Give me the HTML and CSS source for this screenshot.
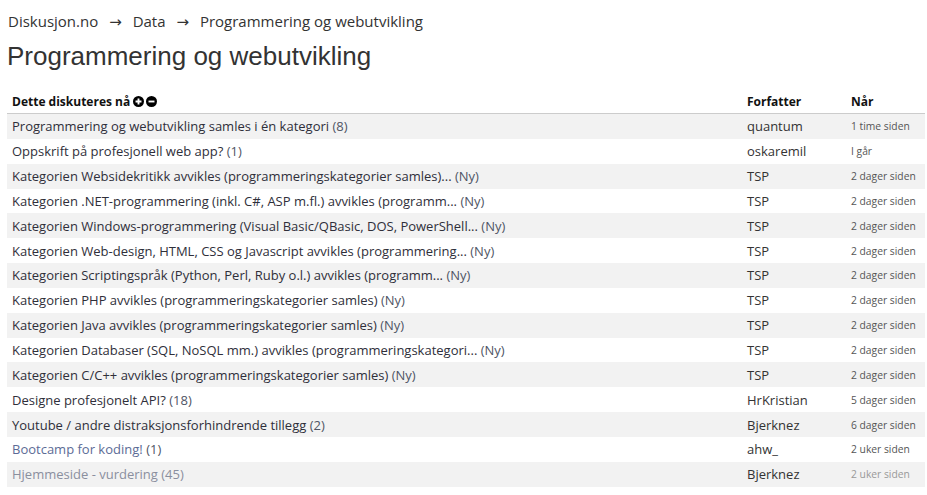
FILE: index.html
```
<!DOCTYPE html>
<html lang="no">
<head>
    <meta charset="UTF-8">
    <title>Programmering og webutvikling</title>
    <link rel="stylesheet" href="styles.css">
</head>
<body>
<div class="page">
    <div class="crumbs">
        <a href="#">Diskusjon.no</a>
        <span class="arrow">&rarr;</span>
        <a href="#">Data</a>
        <span class="arrow">&rarr;</span>
        <a href="#">Programmering og webutvikling</a>
    </div>
    <h1>Programmering og webutvikling</h1>

    <table class="topics">
        <thead>
        <tr>
            <th class="title">Dette diskuteres nå
                <svg class="ico" viewBox="0 0 10 10"><circle cx="5" cy="5" r="5"/><path d="M5 2.3v5.4M2.3 5h5.4" stroke="#fff" stroke-width="1.7"/></svg><svg class="ico" viewBox="0 0 10 10"><circle cx="5" cy="5" r="5"/><path d="M2.3 5h5.4" stroke="#fff" stroke-width="1.7"/></svg>
            </th>
            <th class="author">Forfatter</th>
            <th class="when">Når</th>
        </tr>
        </thead>
        <tbody>
        <tr><td class="title"><a href="#">Programmering og webutvikling samles i én kategori</a> <span class="count">(8)</span></td><td class="author">quantum</td><td class="when">1 time siden</td></tr>
        <tr><td class="title"><a href="#">Oppskrift på profesjonell web app?</a> <span class="count">(1)</span></td><td class="author">oskaremil</td><td class="when">I går</td></tr>
        <tr><td class="title"><a href="#">Kategorien Websidekritikk avvikles (programmeringskategorier samles)...</a> <span class="count">(Ny)</span></td><td class="author">TSP</td><td class="when">2 dager siden</td></tr>
        <tr><td class="title"><a href="#">Kategorien .NET-programmering (inkl. C#, ASP m.fl.) avvikles (programm...</a> <span class="count">(Ny)</span></td><td class="author">TSP</td><td class="when">2 dager siden</td></tr>
        <tr><td class="title"><a href="#">Kategorien Windows-programmering (Visual Basic/QBasic, DOS, PowerShell...</a> <span class="count">(Ny)</span></td><td class="author">TSP</td><td class="when">2 dager siden</td></tr>
        <tr><td class="title"><a href="#">Kategorien Web-design, HTML, CSS og Javascript avvikles (programmering...</a> <span class="count">(Ny)</span></td><td class="author">TSP</td><td class="when">2 dager siden</td></tr>
        <tr><td class="title"><a href="#">Kategorien Scriptingspråk (Python, Perl, Ruby o.l.) avvikles (programm...</a> <span class="count">(Ny)</span></td><td class="author">TSP</td><td class="when">2 dager siden</td></tr>
        <tr><td class="title"><a href="#">Kategorien PHP avvikles (programmeringskategorier samles)</a> <span class="count">(Ny)</span></td><td class="author">TSP</td><td class="when">2 dager siden</td></tr>
        <tr><td class="title"><a href="#">Kategorien Java avvikles (programmeringskategorier samles)</a> <span class="count">(Ny)</span></td><td class="author">TSP</td><td class="when">2 dager siden</td></tr>
        <tr><td class="title"><a href="#">Kategorien Databaser (SQL, NoSQL mm.) avvikles (programmeringskategori...</a> <span class="count">(Ny)</span></td><td class="author">TSP</td><td class="when">2 dager siden</td></tr>
        <tr><td class="title"><a href="#">Kategorien C/C++ avvikles (programmeringskategorier samles)</a> <span class="count">(Ny)</span></td><td class="author">TSP</td><td class="when">2 dager siden</td></tr>
        <tr><td class="title"><a href="#">Designe profesjonelt API?</a> <span class="count">(18)</span></td><td class="author">HrKristian</td><td class="when">5 dager siden</td></tr>
        <tr><td class="title"><a href="#">Youtube / andre distraksjonsforhindrende tillegg</a> <span class="count">(2)</span></td><td class="author">Bjerknez</td><td class="when">6 dager siden</td></tr>
        <tr class="seen"><td class="title"><a href="#">Bootcamp for koding!</a> <span class="count">(1)</span></td><td class="author">ahw_</td><td class="when">2 uker siden</td></tr>
        <tr class="old"><td class="title"><a href="#">Hjemmeside - vurdering</a> <span class="count">(45)</span></td><td class="author">Bjerknez</td><td class="when">2 uker siden</td></tr>
        </tbody>
    </table>
</div>
</body>
</html>
```

FILE: styles.css
```
*{
    margin:0;
    padding:0;
}
body{
    background:#fff;
    color:#333;
    font-family:"Open Sans", "DejaVu Sans", sans-serif;
}
a{
    color:inherit;
    text-decoration:none;
}
.page{
    padding:10px 2px 0 7px;
}
.crumbs{
    font-size:15px;
    line-height:22px;
    color:#333;
    padding-left:1px;
}
.arrow{
    margin:0 7px;
}
h1{
    font-family:"Liberation Sans", Arial, sans-serif;
    font-weight:normal;
    font-size:26px;
    line-height:30px;
    margin-top:9px;
    color:#333;
}
.topics{
    width:100%;
    border-collapse:collapse;
    margin-top:18px;
}
.topics th{
    text-align:left;
    font-size:12px;
    font-weight:bold;
    color:#111;
    height:24px;
    padding:0 5px;
    border-bottom:1px solid #ccc;
    vertical-align:middle;
}
.topics td{
    height:24.85px;
    padding:0 5px;
    font-size:13px;
    vertical-align:middle;
    white-space:nowrap;
}
.topics tbody tr:nth-child(odd){
    background:#f2f2f2;
}
.topics td.title a{
    color:#2f2f3a;
}
.count{
    color:#4f5565;
}
.author{
    width:94px;
}
td.author{
    color:#333;
}
.when{
    width:69px;
}
td.when{
    font-size:10.3px;
    color:#555;
}
.ico{
    width:11px;
    height:11px;
    vertical-align:-1px;
    fill:#000;
}
.ico + .ico{
    margin-left:2px;
}
.topics tr.seen td.title a{
    color:#5c6b96;
}
.topics tr.old td.title a,
.topics tr.old .count{
    color:#8a8f9e;
}
.topics tr.old td.when{
    color:#999;
}
```
